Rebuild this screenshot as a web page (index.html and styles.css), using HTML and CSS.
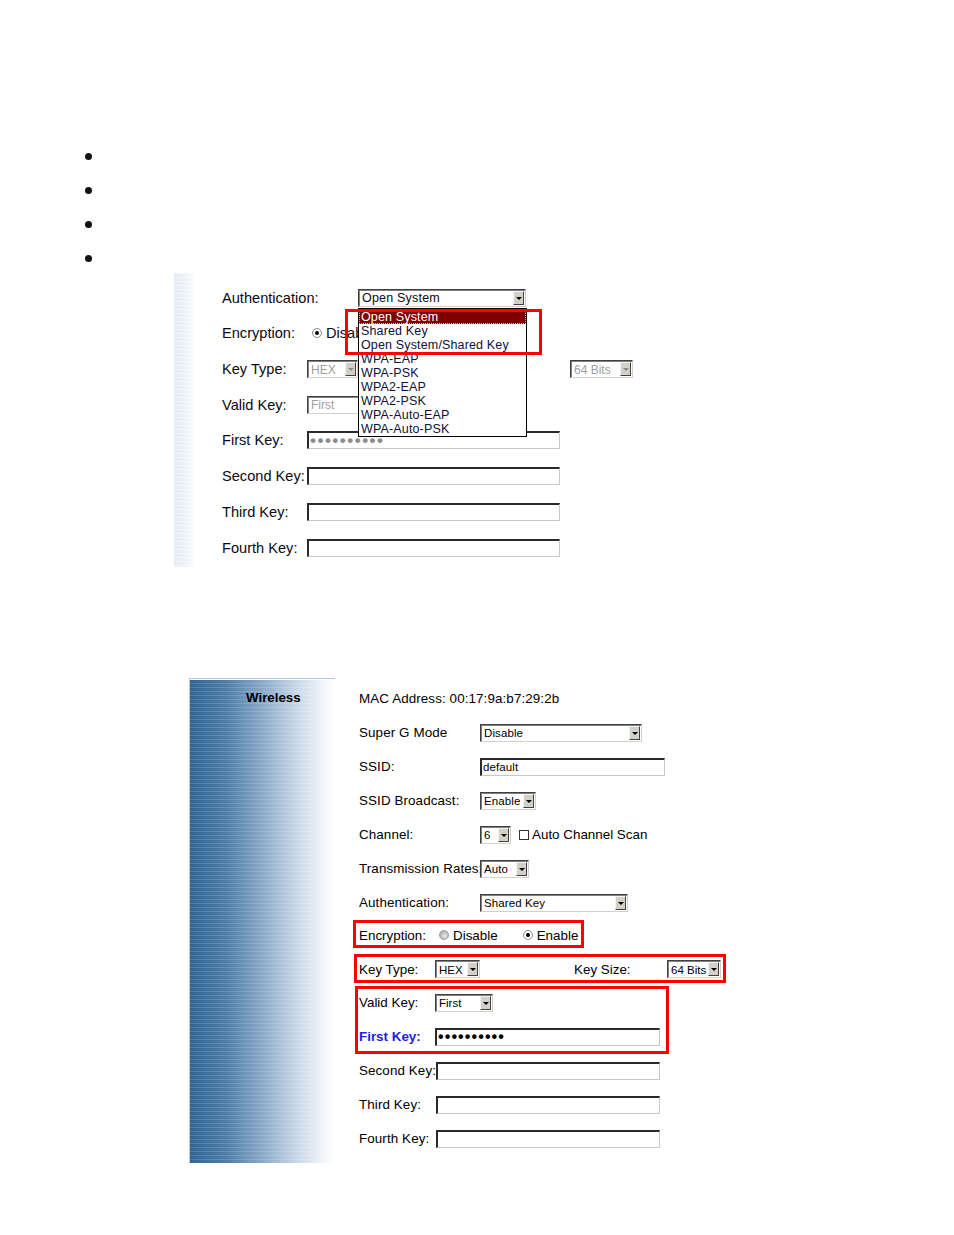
FILE: index.html
```html
<!DOCTYPE html>
<html>
<head>
<meta charset="utf-8">
<link rel="stylesheet" href="styles.css">
</head>
<body>
<div class="page">
  <div class="bullets">
    <span class="dot"></span>
    <span class="dot"></span>
    <span class="dot"></span>
    <span class="dot"></span>
  </div>

  <div class="panel1">
    <div class="strip"></div>
    <div class="p1body">
      <div class="r1">
        <span class="l1 l1-auth">Authentication:</span>
        <div class="sel sel1 w168 anchor">
          <span>Open System</span><span class="btn"></span>
          <div class="dropdown">
            <div class="opt on">Open System</div>
            <div class="opt">Shared Key</div>
            <div class="opt">Open System/Shared Key</div>
            <div class="opt">WPA-EAP</div>
            <div class="opt">WPA-PSK</div>
            <div class="opt">WPA2-EAP</div>
            <div class="opt">WPA2-PSK</div>
            <div class="opt">WPA-Auto-EAP</div>
            <div class="opt">WPA-Auto-PSK</div>
          </div>
          <div class="redbox-top"></div>
        </div>
      </div>
      <div class="r1">
        <span class="l1 l1-enc">Encryption:</span>
        <span class="radio on"></span><span class="rtext1">Disable</span>
      </div>
      <div class="r1">
        <span class="l1">Key Type:</span>
        <div class="sel sel1 dis w51"><span>HEX</span><span class="btn"></span></div>
        <div class="sel sel1 dis w63 gap212"><span>64 Bits</span><span class="btn"></span></div>
      </div>
      <div class="r1">
        <span class="l1">Valid Key:</span>
        <div class="sel sel1 dis w65"><span>First</span><span class="btn"></span></div>
      </div>
      <div class="r1">
        <span class="l1">First Key:</span>
        <div class="inp w253"><span class="dots gray">••••••••••</span></div>
      </div>
      <div class="r1">
        <span class="l1">Second Key:</span>
        <div class="inp w253"></div>
      </div>
      <div class="r1">
        <span class="l1">Third Key:</span>
        <div class="inp w253"></div>
      </div>
      <div class="r1">
        <span class="l1">Fourth Key:</span>
        <div class="inp w253"></div>
      </div>
    </div>
  </div>

  <div class="panel2">
    <div class="side">Wireless</div>
    <div class="p2body">
      <div class="r2">MAC Address: 00:17:9a:b7:29:2b</div>
      <div class="r2">
        <span class="l2">Super G Mode</span>
        <div class="sel w162"><span>Disable</span><span class="btn"></span></div>
      </div>
      <div class="r2">
        <span class="l2">SSID:</span>
        <div class="inp w185"><span class="val">default</span></div>
      </div>
      <div class="r2">
        <span class="l2">SSID Broadcast:</span>
        <div class="sel w56"><span>Enable</span><span class="btn"></span></div>
      </div>
      <div class="r2">
        <span class="l2">Channel:</span>
        <div class="sel w31"><span>6</span><span class="btn"></span></div>
        <span class="check"></span><span class="ctext">Auto Channel Scan</span>
      </div>
      <div class="r2">
        <span class="l2">Transmission Rates:</span>
        <div class="sel w49"><span>Auto</span><span class="btn"></span></div>
      </div>
      <div class="r2">
        <span class="l2">Authentication:</span>
        <div class="sel w148"><span>Shared Key</span><span class="btn"></span></div>
      </div>

      <div class="box box-enc">
        <span class="l2e">Encryption:</span>
        <span class="radio off"></span><span class="rtext">Disable</span>
        <span class="radio on gap25"></span><span class="rtext">Enable</span>
      </div>

      <div class="box box-kt">
        <span class="l2k">Key Type:</span>
        <div class="sel w45"><span>HEX</span><span class="btn"></span></div>
        <span class="ks">Key Size:</span>
        <div class="sel w54"><span>64 Bits</span><span class="btn"></span></div>
      </div>

      <div class="box box-vk">
        <div class="vrow">
          <span class="l2k">Valid Key:</span>
          <div class="sel w58"><span>First</span><span class="btn"></span></div>
        </div>
        <div class="vrow vrow2">
          <span class="l2k fk">First Key:</span>
          <div class="inp w225"><span class="dots">••••••••••</span></div>
        </div>
      </div>

      <div class="r2">
        <span class="l2m">Second Key:</span>
        <div class="inp w224"></div>
      </div>
      <div class="r2">
        <span class="l2m">Third Key:</span>
        <div class="inp w224"></div>
      </div>
      <div class="r2">
        <span class="l2m">Fourth Key:</span>
        <div class="inp w224"></div>
      </div>
    </div>
  </div>
</div>
</body>
</html>
```

FILE: styles.css
```css
html, body {
  margin: 0;
  padding: 0;
  background: #fff;
}
body {
  font-family: "Liberation Sans", Arial, sans-serif;
  color: #000;
}
.page {
  width: 954px;
  height: 1235px;
  overflow: hidden;
}

/* bullets */
.bullets {
  display: flex;
  flex-direction: column;
  gap: 27.3px;
  padding: 152.5px 0 10.5px 84.5px;
}
.dot {
  display: block;
  width: 7px;
  height: 7px;
  border-radius: 50%;
  background: #111;
}

/* shared controls */
.sel {
  display: flex;
  align-items: center;
  justify-content: space-between;
  flex-shrink: 0;
  height: 18px;
  box-sizing: border-box;
  border: 1px solid;
  border-color: #404040 #d4d0c8 #d4d0c8 #404040;
  box-shadow: inset 1px 1px 0 #808080;
  background: #fff;
  font-size: 11.5px;
  padding: 1px 1px 0 3px;
  white-space: nowrap;
}
.sel .btn {
  display: flex;
  align-items: center;
  justify-content: center;
  width: 11px;
  height: 14px;
  box-sizing: border-box;
  background: #d4d0c8;
  border: 1px solid;
  border-color: #f4f4f4 #404040 #404040 #f4f4f4;
  margin-top: -1px;
  flex-shrink: 0;
}
.sel .btn::after {
  content: "";
  border-left: 3px solid transparent;
  border-right: 3px solid transparent;
  border-top: 3px solid #000;
  margin-top: 1px;
}
.sel.dis {
  color: #a0a0a0;
}
.sel.dis .btn::after {
  border-top-color: #8a8a8a;
}
.sel1 {
  font-size: 12.5px;
  letter-spacing: 0.2px;
}
.sel1.dis {
  font-size: 12px;
  letter-spacing: 0;
}
.inp {
  display: flex;
  align-items: center;
  flex-shrink: 0;
  height: 18px;
  box-sizing: border-box;
  border-style: solid;
  border-width: 2px 1px 1px 2px;
  border-color: #2a2a2a #c8c8c8 #c8c8c8 #2a2a2a;
  background: #fff;
  overflow: hidden;
}
.inp .val {
  font-size: 11.5px;
  padding-left: 1px;
}
.dots {
  font-size: 16px;
  letter-spacing: 1.1px;
  line-height: 14px;
  padding-left: 1px;
  font-weight: bold;
}
.dots.gray {
  color: #8c8c8c;
  font-size: 17px;
  letter-spacing: 1.5px;
}
.radio {
  display: inline-block;
  flex-shrink: 0;
  width: 10px;
  height: 10px;
  box-sizing: border-box;
  border-radius: 50%;
  border: 1px solid #8a8a8a;
  background: #fff;
  position: relative;
}
.radio.on::after {
  content: "";
  position: absolute;
  left: 2px;
  top: 2px;
  width: 4px;
  height: 4px;
  border-radius: 50%;
  background: #000;
}
.radio.off {
  background: radial-gradient(circle at 60% 60%, #e8e8e8 0, #b4b4b4 70%);
  border-color: #9a9a9a;
}
.check {
  display: inline-block;
  flex-shrink: 0;
  width: 10px;
  height: 10px;
  box-sizing: border-box;
  border: 1px solid #333;
  background: #fff;
  margin-left: 8px;
}
.ctext {
  margin-left: 3px;
  letter-spacing: 0;
}

/* widths */
.w31 { width: 31px; }
.w45 { width: 45px; }
.w49 { width: 49px; }
.w51 { width: 51px; }
.w54 { width: 54px; }
.w56 { width: 56px; }
.w58 { width: 58px; }
.w63 { width: 63px; }
.w65 { width: 65px; }
.w148 { width: 148px; }
.w162 { width: 162px; }
.w168 { width: 168px; }
.w185 { width: 185px; }
.w224 { width: 224px; }
.w225 { width: 225px; }
.w253 { width: 253px; }
.gap212 { margin-left: 212px; }
.gap25 { margin-left: 25px; }

/* top panel */
.panel1 {
  display: flex;
  margin-left: 174px;
  height: 294px;
}
.strip {
  width: 21px;
  flex-shrink: 0;
  background:
    repeating-linear-gradient(to bottom, rgba(255,255,255,0.35) 0 1px, transparent 1px 4px),
    linear-gradient(to right, #e6ecf5 0%, #edf1f8 50%, #f6f8fc 85%, #fff 100%);
}
.p1body {
  padding: 7px 0 0 27px;
}
.r1 {
  display: flex;
  align-items: center;
  height: 35.7px;
  font-size: 14.6px;
  white-space: nowrap;
  color: #0a0a14;
}
.l1 {
  width: 85px;
  flex-shrink: 0;
}
.l1-auth { width: 136px; }
.l1-enc { width: 90px; }
.rtext1 {
  margin-left: 4px;
  width: 32px;
  overflow: hidden;
  flex-shrink: 0;
}
.anchor {
  position: relative;
}
.dropdown {
  position: absolute;
  left: -1px;
  top: 18px;
  width: 169px;
  height: 129px;
  box-sizing: border-box;
  border: 1px solid #000;
  background: #fff;
  padding-top: 1px;
  z-index: 2;
  letter-spacing: 0.15px;
}
.opt {
  height: 14px;
  line-height: 14px;
  padding-left: 2px;
  font-size: 12.5px;
  color: #10103a;
}
.opt.on {
  background: #800000;
  color: #fff;
  outline: 1px dotted #d8c0c0;
  outline-offset: -1px;
}
.redbox-top {
  position: absolute;
  left: -14px;
  top: 19px;
  width: 197px;
  height: 46px;
  box-sizing: border-box;
  border: 3px solid #f00;
  z-index: 3;
}

/* bottom panel */
.panel2 {
  display: flex;
  margin: 111px 0 0 189px;
  height: 485px;
}
.side {
  width: 146px;
  flex-shrink: 0;
  box-sizing: border-box;
  border-left: 1px solid #c6ccd4;
  border-top: 1px solid #b8c4d0;
  box-shadow: inset 0 1px 0 #fff;
  padding: 11px 0 0 56px;
  font-size: 13.3px;
  font-weight: bold;
  color: #000;
  background:
    repeating-linear-gradient(to bottom, rgba(255,255,255,0.14) 0 1px, transparent 1px 4px),
    linear-gradient(to right, #2f6696 0%, #4f7ea8 25%, #8aaac8 50%, #c5d5e5 72%, #eef2f8 90%, #fff 100%);
}
.p2body {
  padding: 4px 0 0 24px;
}
.r2 {
  display: flex;
  align-items: center;
  height: 34px;
  font-size: 13.4px;
  letter-spacing: 0.1px;
  white-space: nowrap;
  color: #000;
}
.l2 {
  width: 121px;
  flex-shrink: 0;
}
.l2m {
  width: 77px;
  flex-shrink: 0;
}
.l2k {
  width: 76px;
  flex-shrink: 0;
}
.l2e {
  width: 80px;
  flex-shrink: 0;
}
.rtext {
  margin-left: 4px;
}
.box {
  box-sizing: border-box;
  border: 3px solid #f00;
  font-size: 13.4px;
  white-space: nowrap;
}
.box-enc {
  display: flex;
  align-items: center;
  width: 231px;
  height: 28px;
  margin: 0 0 6px -6px;
  padding: 3px 0 0 3px;
}
.box-kt {
  display: flex;
  align-items: center;
  width: 372px;
  height: 29px;
  margin: 0 0 3px -5px;
  padding: 2px 0 0 2px;
}
.ks {
  width: 93px;
  margin-left: 94px;
  flex-shrink: 0;
}
.box-vk {
  width: 314px;
  height: 68px;
  margin: 0 0 0 -4px;
  padding-left: 1px;
}
.vrow {
  display: flex;
  align-items: center;
  height: 28px;
}
.vrow2 {
  height: 34px;
  padding-top: 6px;
  box-sizing: border-box;
}
.fk {
  color: #2222dd;
  font-weight: bold;
}
```
